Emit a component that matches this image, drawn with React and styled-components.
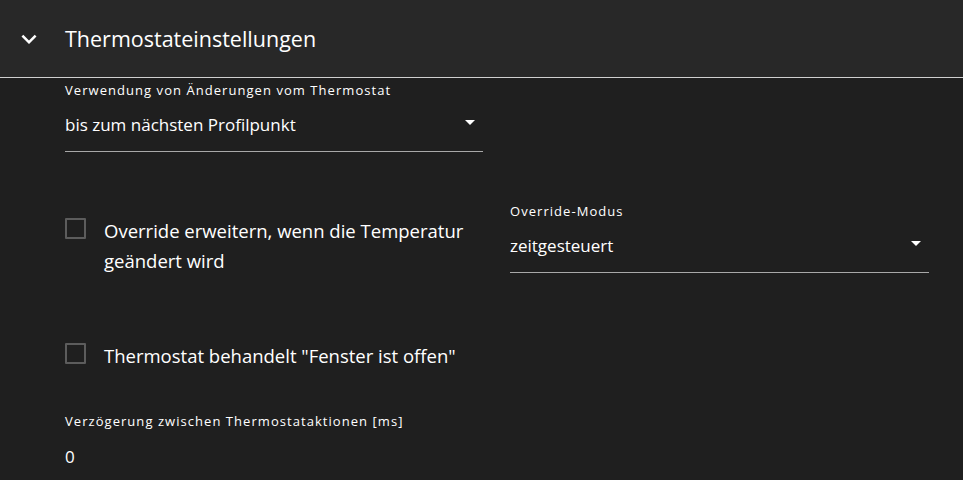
import React from 'react'
import styled, { createGlobalStyle } from 'styled-components'

const Global = createGlobalStyle`
  html, body {
    margin: 0;
    background: #1f1f1f;
    font-family: 'Open Sans', 'Noto Sans', sans-serif;
    color: #fff;
  }
`

const Header = styled.div`
  height: 77px;
  background: #282828;
  border-bottom: 1px solid #d0d0d0;
  display: flex;
  align-items: center;
  padding-left: 14px;
`

const Chevron = styled.svg`
  width: 30px;
  height: 30px;
  margin-right: 21px;
  fill: #fff;
`

const Title = styled.div`
  font-size: 21.5px;
  font-weight: 500;
`

const Body = styled.div`
  padding: 0 34px 0 65px;
`

const Row = styled.div`
  display: grid;
  grid-template-columns: 418px 1fr;
  column-gap: 27px;
  align-items: start;
  padding-top: ${p => p.top || 0}px;
`

const Field = styled.div`
  display: flex;
  flex-direction: column;
  width: ${p => p.width || 418}px;
`

const Label = styled.div`
  font-size: 13px;
  line-height: 16px;
  color: #fff;
  letter-spacing: 1.05px;
  white-space: nowrap;
`

const SelectBox = styled.div`
  display: flex;
  align-items: center;
  justify-content: space-between;
  height: 53px;
  border-bottom: 1px solid #a8a8a8;
  font-size: 17px;
  padding-right: 8px;
`

const Value = styled.div`
  font-size: 17px;
  padding-top: ${p => p.top || 0}px;
`

const Arrow = styled.span`
  width: 0;
  height: 0;
  border-left: 5.5px solid transparent;
  border-right: 5.5px solid transparent;
  border-top: 5.5px solid #fff;
  margin-bottom: 4px;
`

const CheckRow = styled.label`
  display: flex;
  align-items: flex-start;
  gap: 18px;
  font-size: 18.5px;
  line-height: 30px;
  padding-top: ${p => p.top || 0}px;
`

const Box = styled.span`
  flex: none;
  box-sizing: border-box;
  width: 21px;
  height: 21px;
  border: 2px solid #5c5c5c;
  border-radius: 1px;
  margin-top: 2px;
`

const Select = ({ label, value, width }) => (
  <Field width={width}>
    <Label>{label}</Label>
    <SelectBox>
      <span>{value}</span>
      <Arrow />
    </SelectBox>
  </Field>
)

export default function App() {
  return (
    <>
      <Global />
      <Header>
        <Chevron viewBox="0 0 24 24">
          <path d="M16.59 8.59L12 13.17 7.41 8.59 6 10l6 6 6-6z" />
        </Chevron>
        <Title>Thermostateinstellungen</Title>
      </Header>
      <Body>
        <Row top={4}>
          <Select label="Verwendung von Änderungen vom Thermostat" value="bis zum nächsten Profilpunkt" />
        </Row>
        <Row top={51}>
          <CheckRow top={13}>
            <Box />
            <span>Override erweitern, wenn die Temperatur geändert wird</span>
          </CheckRow>
          <Select label="Override-Modus" value="zeitgesteuert" width={419} />
        </Row>
        <Row top={65}>
          <CheckRow>
            <Box />
            <span>Thermostat behandelt "Fenster ist offen"</span>
          </CheckRow>
        </Row>
        <Row top={42}>
          <Field>
            <Label>Verzögerung zwischen Thermostataktionen [ms]</Label>
            <Value top={16}>0</Value>
          </Field>
        </Row>
      </Body>
    </>
  )
}
